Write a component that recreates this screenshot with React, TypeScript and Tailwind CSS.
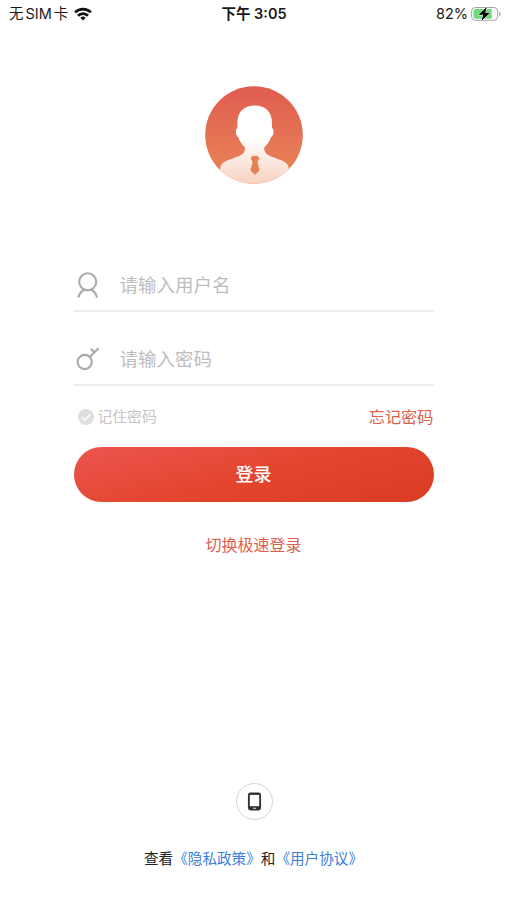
import React from "react";

function Wifi() {
  return (
    <svg width="18" height="14" viewBox="0 0 18 14" fill="none" stroke="#111" strokeWidth="2.7">
      <path d="M1.1 5.4a11.2 11.2 0 0 1 15.8 0" />
      <path d="M4 8.7a7 7 0 0 1 10 0" />
      <path d="M9 13.4 6.3 10.8a3.8 3.8 0 0 1 5.4 0Z" fill="#111" stroke="none" />
    </svg>
  );
}

function Battery() {
  return (
    <svg width="31" height="16" viewBox="0 0 31 16">
      <rect x=".6" y="1.5" width="26" height="12.8" rx="3.6" fill="#fff" stroke="#a3a3a3" />
      <path d="M5 3.1h15.7v9.6H5a2.6 2.6 0 0 1-2.6-2.6V5.7A2.6 2.6 0 0 1 5 3.1Z" fill="#72d97b" />
      <path d="M28.2 5.8c2 .8 2 3.8 0 4.6Z" fill="#a3a3a3" />
      <path d="M15.8 1 7.6 8.8h4.8L10.3 15l8.800-8.200h-4.900Z" fill="#000" stroke="#fff" strokeWidth="1" paintOrder="stroke" />
    </svg>
  );
}

function Avatar() {
  return (
    <svg width="98" height="98" viewBox="0 0 98 98">
      <defs>
        <linearGradient id="disc" x1="0" y1="0" x2="0" y2="1">
          <stop offset="0" stopColor="#e05c50" />
          <stop offset="1" stopColor="#e98858" />
        </linearGradient>
        <linearGradient id="person" x1="0" y1="0" x2="0" y2="1">
          <stop offset="0" stopColor="#fff" />
          <stop offset=".42" stopColor="#fff" />
          <stop offset="1" stopColor="#f7d2c0" />
        </linearGradient>
        <clipPath id="round">
          <circle cx="49" cy="49" r="48.8" />
        </clipPath>
      </defs>
      <g clipPath="url(#round)">
        <rect width="98" height="98" fill="url(#disc)" />
        <path
          d="M49.7 19.5C38.500 19.500 32.400 26.500 32.400 37v5c-2.500 1.200-1.800 8 .900 9 1.400 4.500 3.800 7.700 6.500 10.300.5 4-1 6.700-5.500 8.600C28 72.600 20 74 16.500 78.500c-1.800 2.500-1.500 6-1 19.500h68c.5-13.500.8-17-1-19.500C79 74 71 72.600 64.900 69.900c-4.500-1.900-6-4.600-5.500-8.600 2.700-2.600 5.300-5.800 6.700-10.300 2.700-1 3.400-7.800.9-9v-5c0-10.500-6.100-17.500-17.300-17.500Z"
          fill="url(#person)"
        />
        <path d="M47.400 70.200h5.200l1.400 2.200-1.900 3.600h-4.200L46 72.400Z M48 76h4l2.300 8.300-4.300 4.200-4.300-4.200Z" fill="#e58052" stroke="#e58052" strokeWidth=".6" strokeLinejoin="round" />
      </g>
    </svg>
  );
}

function UserIcon() {
  return (
    <svg width="24" height="28" viewBox="0 0 24 28" fill="none" stroke="#aaa" strokeWidth="2.1">
      <circle cx="11.7" cy="10.7" r="8.5" />
      <path d="M2.3 26.5c.8-3.6 2.900-6.300 6.500-8.200M21.100 26.500c-.8-3.600-2.900-6.300-6.500-8.200" />
    </svg>
  );
}

function KeyIcon() {
  return (
    <svg width="24" height="24" viewBox="0 0 24 24" fill="none" stroke="#aaa" strokeWidth="2.1">
      <circle cx="8.7" cy="15" r="7.1" />
      <path d="M13.700 10 22.500 1.300M14.800 1.800l3.500 3.500" />
    </svg>
  );
}

function Field({ icon, label }: { icon: React.ReactNode; label: string }) {
  return (
    <label className="flex h-[52px] items-center border-b-2 border-[#ececec]">
      <span className="flex w-[46px] shrink-0 items-center pl-[2px]">{icon}</span>
      <span className="whitespace-nowrap pt-[2px] text-[18.5px] leading-[48px] text-[#bdbdbd]">{label}</span>
    </label>
  );
}

export default function App() {
  return (
    <main lang="zh-CN" className="flex h-[900px] w-[507px] flex-col overflow-hidden bg-white font-['Liberation_Sans','Noto_Sans_CJK_SC',sans-serif]">
      <header className="grid h-[28px] shrink-0 grid-cols-3 items-center pr-[5px] pl-[9px] font-['Inter','Noto_Sans_CJK_SC',sans-serif] text-[14.5px] leading-[28px] text-[#1a1a1a]">
        <div className="flex items-center gap-[6px] whitespace-nowrap">
          <span>无<span className="mx-[2px]">SIM</span>卡</span>
          <Wifi />
        </div>
        <div className="whitespace-nowrap pr-[3px] text-center font-semibold">下午 3:05</div>
        <div className="flex items-center justify-end gap-[3px]">
          <span>82%</span>
          <Battery />
        </div>
      </header>

      <div className="mt-[58px] flex h-[98px] shrink-0 justify-center pl-[1px]">
        <Avatar />
      </div>

      <section className="mx-auto mt-[76px] w-[360px] shrink-0">
        <Field icon={<UserIcon />} label="请输入用户名" />
        <div className="mt-[22px]">
          <Field icon={<KeyIcon />} label="请输入密码" />
        </div>
        <div className="flex h-[61px] items-center justify-between pt-[2px]">
          <div className="flex items-center gap-[4px] pl-[4px] text-[14.8px] text-[#c5c5c5]">
            <svg className="mb-[2px]" width="16" height="16" viewBox="0 0 16 16">
              <circle cx="8" cy="8" r="8" fill="#dedede" />
              <path d="m4 8.200 2.800 2.800 5.400-5.600" fill="none" stroke="#fff" strokeWidth="1.5" />
            </svg>
            <span>记住密码</span>
          </div>
          <button className="text-[16.2px] text-[#dc5f50]">忘记密码</button>
        </div>
        <button className="block h-[55px] w-full rounded-full bg-linear-[165deg] from-[#ec554f] via-[#e3452f] to-[#db3b22] text-[18px] font-medium leading-[55px] text-white">
          <span className="block pt-[2px] leading-[53px]">登录</span>
        </button>
        <button className="mx-auto mt-[32px] block h-6 text-[16px] leading-6 text-[#dc5f50]">切换极速登录</button>
      </section>

      <footer className="mt-auto flex flex-col items-center pb-[29px]">
        <div className="ml-[1px] flex size-[37px] items-center justify-center rounded-full border border-[#d5d5d5]">
          <svg width="15" height="19" viewBox="0 0 16 20">
            <rect x="1" y=".5" width="14" height="19" rx="2.6" fill="#333" />
            <path d="M3 3h10v12H3Z" fill="#fff" />
            <path d="M6.5 17.2h3" stroke="#fff" strokeWidth="1" />
          </svg>
        </div>
        <p className="mt-[27px] h-6 whitespace-nowrap text-[14.6px] leading-6 text-[#222]">
          查看<span className="text-[#3b7edb]">《隐私政策》</span>和<span className="text-[#3b7edb]">《用户协议》</span>
        </p>
      </footer>
    </main>
  );
}
